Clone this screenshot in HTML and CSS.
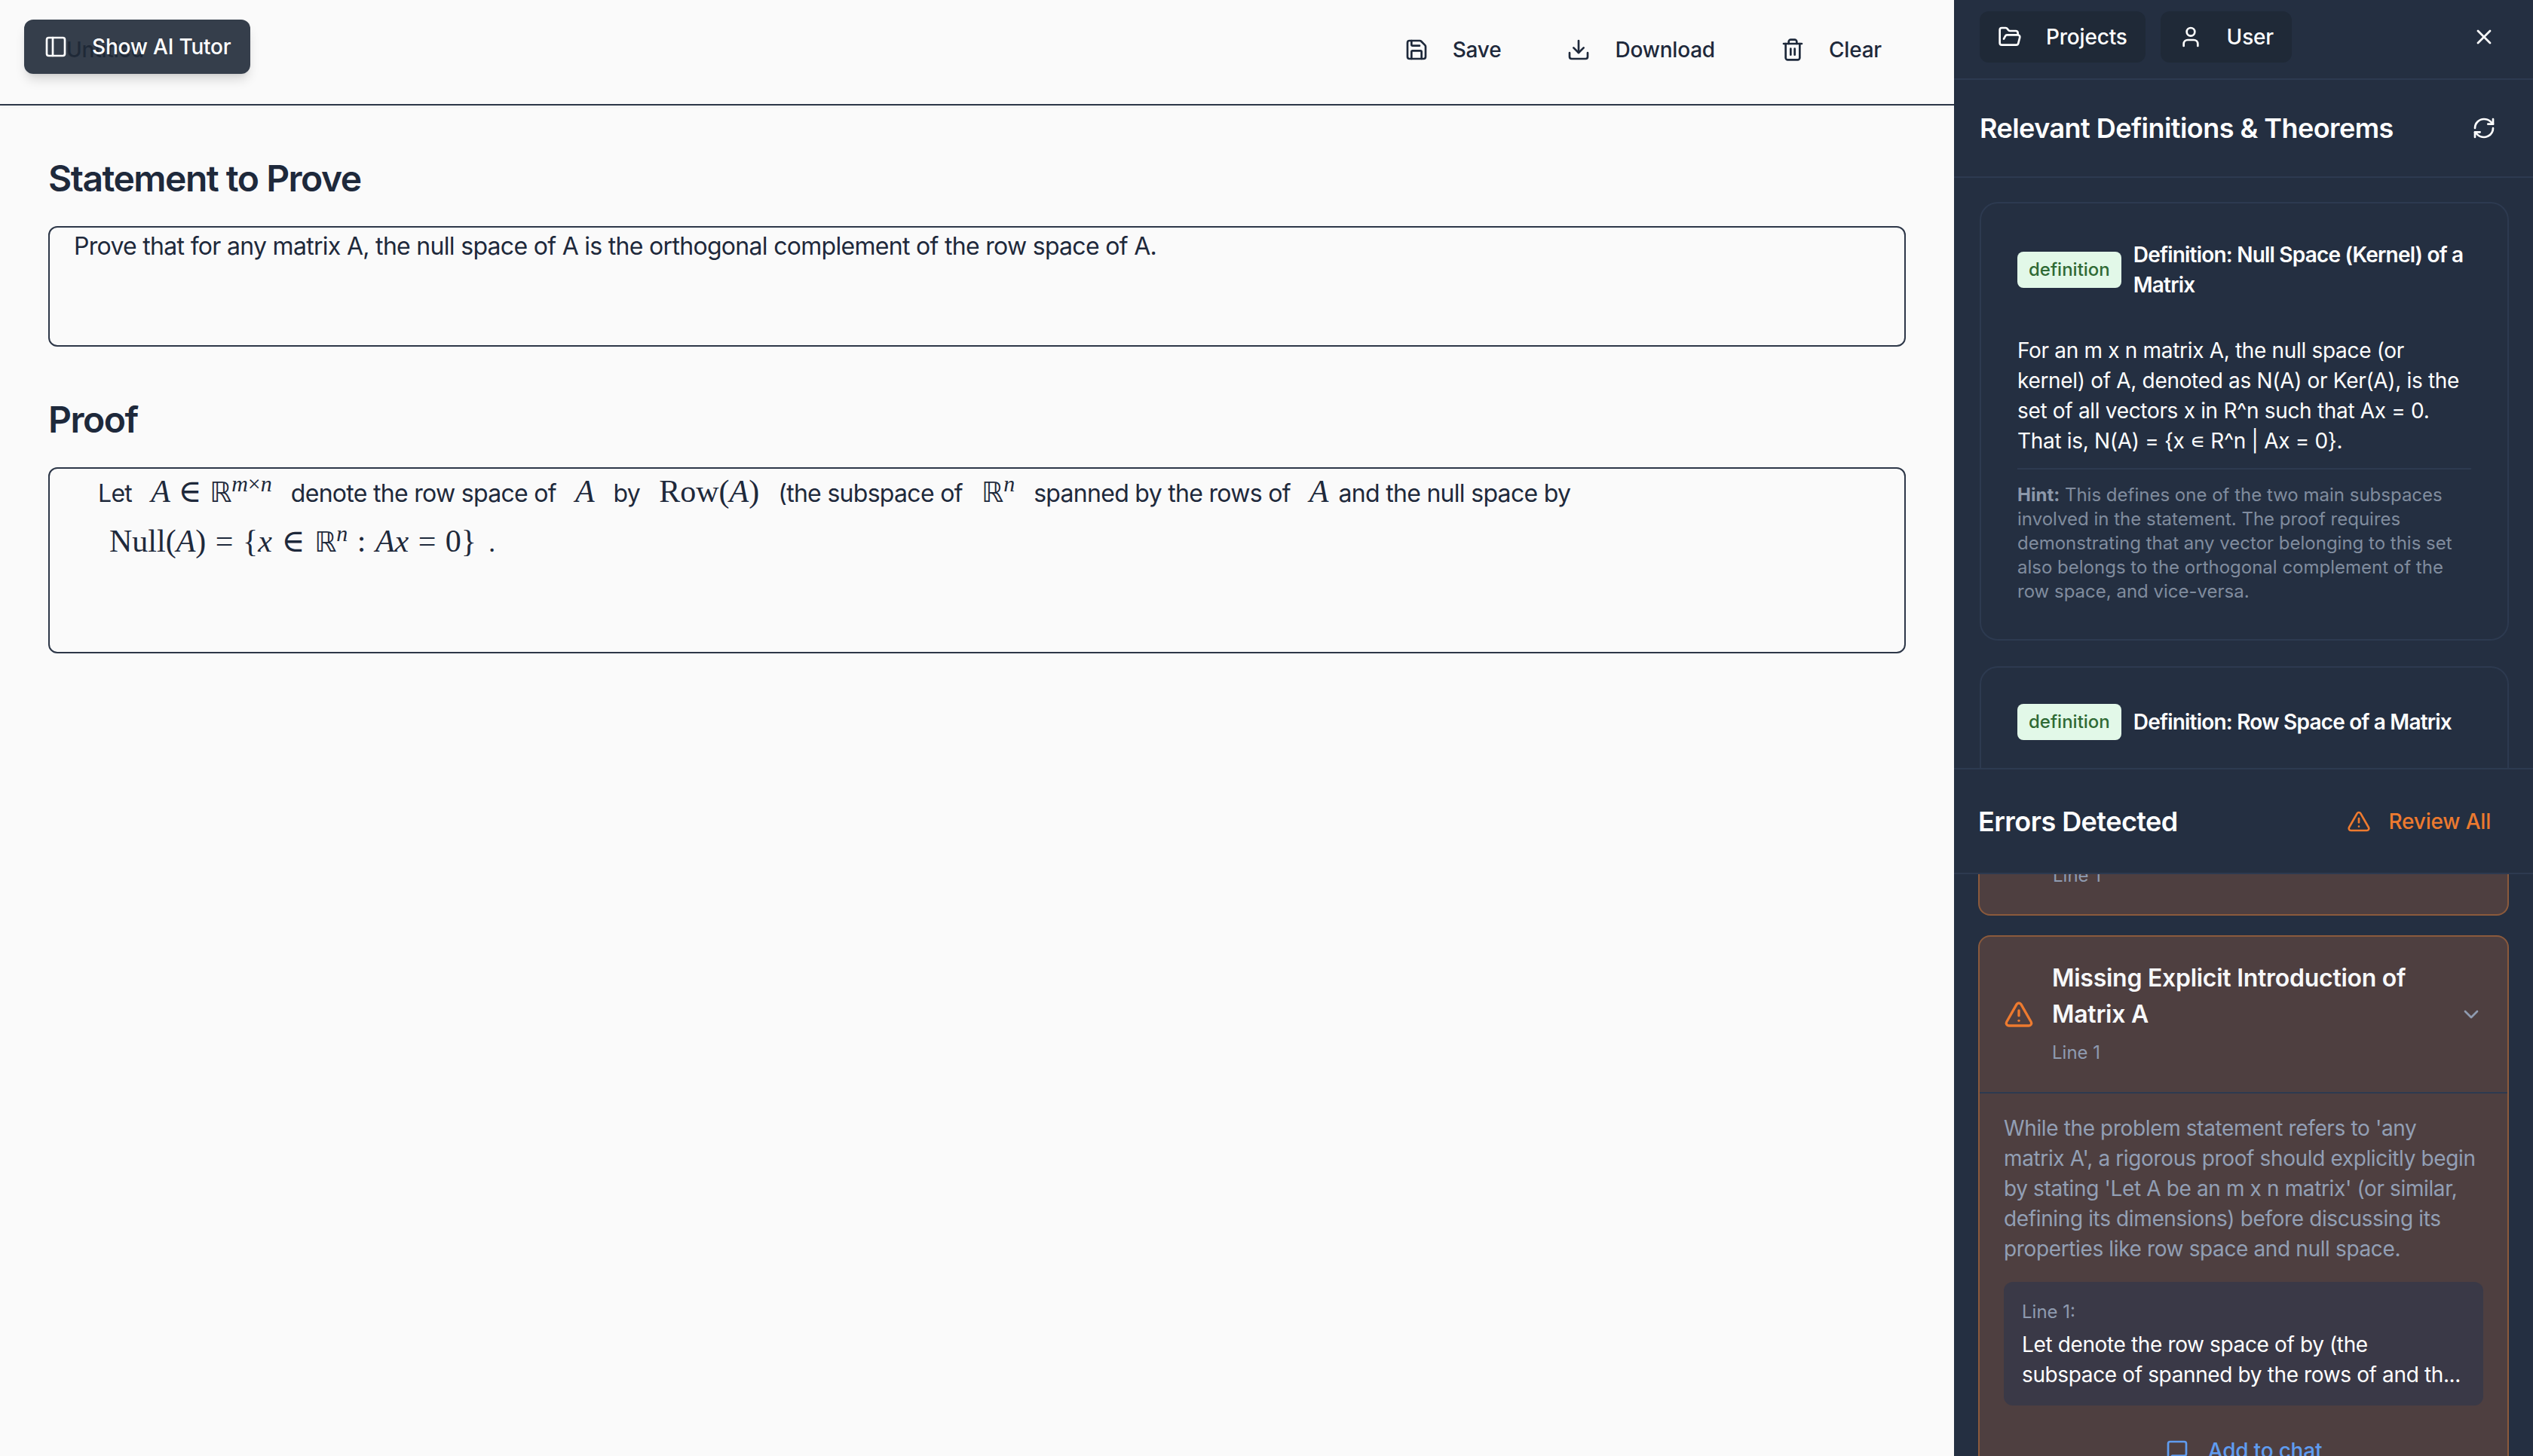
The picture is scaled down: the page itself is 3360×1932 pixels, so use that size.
FILE: index.html
```html
<!DOCTYPE html>
<html lang="en">
<head>
<meta charset="utf-8">
<title>Proof Editor</title>
<link rel="stylesheet" href="styles.css">
</head>
<body>
<svg class="sprite" width="0" height="0" aria-hidden="true">
  <symbol id="i-panel" viewBox="0 0 24 24"><rect x="3" y="3" width="18" height="18" rx="2"/><path d="M9 3v18"/></symbol>
  <symbol id="i-save" viewBox="0 0 24 24"><path d="M15.2 3a2 2 0 0 1 1.4.6l3.8 3.8a2 2 0 0 1 .6 1.4V19a2 2 0 0 1-2 2H5a2 2 0 0 1-2-2V5a2 2 0 0 1 2-2z"/><path d="M17 21v-7a1 1 0 0 0-1-1H8a1 1 0 0 0-1 1v7"/><path d="M7 3v4a1 1 0 0 0 1 1h7"/></symbol>
  <symbol id="i-download" viewBox="0 0 24 24"><path d="M21 15v4a2 2 0 0 1-2 2H5a2 2 0 0 1-2-2v-4"/><path d="m7 10 5 5 5-5"/><path d="M12 15V3"/></symbol>
  <symbol id="i-trash" viewBox="0 0 24 24"><path d="M3 6h18"/><path d="M19 6v14c0 1-1 2-2 2H7c-1 0-2-1-2-2V6"/><path d="M8 6V4c0-1 1-2 2-2h4c1 0 2 1 2 2v2"/><path d="M10 11v6"/><path d="M14 11v6"/></symbol>
  <symbol id="i-folder" viewBox="0 0 24 24"><path d="m6 14 1.5-2.9A2 2 0 0 1 9.24 10H20a2 2 0 0 1 1.94 2.5l-1.54 6a2 2 0 0 1-1.95 1.5H4a2 2 0 0 1-2-2V5a2 2 0 0 1 2-2h3.9a2 2 0 0 1 1.69.9l.81 1.2a2 2 0 0 0 1.67.9H18a2 2 0 0 1 2 2v2"/></symbol>
  <symbol id="i-user" viewBox="0 0 24 24"><path d="M19 21v-2a4 4 0 0 0-4-4H9a4 4 0 0 0-4 4v2"/><circle cx="12" cy="7" r="4"/></symbol>
  <symbol id="i-x" viewBox="0 0 24 24"><path d="M18 6 6 18"/><path d="m6 6 12 12"/></symbol>
  <symbol id="i-refresh" viewBox="0 0 24 24"><path d="M3 12a9 9 0 0 1 9-9 9.75 9.75 0 0 1 6.74 2.74L21 8"/><path d="M21 3v5h-5"/><path d="M21 12a9 9 0 0 1-9 9 9.75 9.75 0 0 1-6.74-2.74L3 16"/><path d="M8 16H3v5"/></symbol>
  <symbol id="i-alert" viewBox="0 0 24 24"><path d="m21.73 18-8-14a2 2 0 0 0-3.48 0l-8 14A2 2 0 0 0 4 21h16a2 2 0 0 0 1.73-3"/><path d="M12 9v4"/><path d="M12 17h.01"/></symbol>
  <symbol id="i-chev" viewBox="0 0 24 24"><path d="m6 9 6 6 6-6"/></symbol>
  <symbol id="i-chat" viewBox="0 0 24 24"><path d="M21 15a2 2 0 0 1-2 2H7l-4 4V5a2 2 0 0 1 2-2h14a2 2 0 0 1 2 2z"/></symbol>
</svg>

<div class="app">
  <main class="main">
    <button class="tutor-btn"><svg class="icon"><use href="#i-panel"/></svg>Show AI Tutor</button>
    <header class="topbar">
      <div class="doc-title">Untitled</div>
      <div class="actions">
        <button class="action"><svg class="icon"><use href="#i-save"/></svg>Save</button>
        <button class="action"><svg class="icon"><use href="#i-download"/></svg>Download</button>
        <button class="action"><svg class="icon"><use href="#i-trash"/></svg>Clear</button>
      </div>
    </header>
    <div class="content">
      <h2 class="section-title">Statement to Prove</h2>
      <div class="editor editor-statement">Prove that for any matrix A, the null space of A is the orthogonal complement of the row space of A.</div>
      <h2 class="section-title section-proof">Proof</h2>
      <div class="editor editor-proof">
        <div class="proof-line">
          <span>Let</span>
          <span class="math"><i>A</i> ∈ <b class="bb">ℝ</b><sup><i>m</i>×<i>n</i></sup></span>
          <span>denote the row space of</span>
          <span class="math"><i>A</i></span>
          <span>by</span>
          <span class="math">Row(<i>A</i>)</span>
          <span>(the subspace of</span>
          <span class="math"><b class="bb">ℝ</b><sup><i>n</i></sup></span>
          <span>spanned by the rows of</span>
          <span class="math"><i>A</i></span>
          <span class="and">and the null space by</span>
        </div>
        <div class="proof-line proof-line-2">
          <span class="math math-wide">Null(<i>A</i>) = {<i>x</i> ∈ <b class="bb">ℝ</b><sup><i>n</i></sup> : <i>Ax</i> = 0}</span>
          <span>.</span>
        </div>
      </div>
    </div>
  </main>

  <aside class="panel">
    <div class="panel-top">
      <button class="nav-btn"><svg class="icon"><use href="#i-folder"/></svg>Projects</button>
      <button class="nav-btn"><svg class="icon"><use href="#i-user"/></svg>User</button>
      <svg class="icon close"><use href="#i-x"/></svg>
    </div>

    <section class="defs">
      <div class="panel-head">
        <h3 class="panel-title">Relevant Definitions &amp; Theorems</h3>
        <svg class="icon"><use href="#i-refresh"/></svg>
      </div>
      <div class="defs-list">
        <article class="def-card">
          <div class="def-head">
            <span class="badge">definition</span>
            <span class="def-title">Definition: Null Space (Kernel) of a Matrix</span>
          </div>
          <p class="def-body">For an m x n matrix A, the null space (or kernel) of A, denoted as N(A) or Ker(A), is the set of all vectors x in R^n such that Ax = 0. That is, N(A) = {x ∊ R^n | Ax = 0}.</p>
          <p class="def-hint"><strong>Hint:</strong> This defines one of the two main subspaces involved in the statement. The proof requires demonstrating that any vector belonging to this set also belongs to the orthogonal complement of the row space, and vice-versa.</p>
        </article>
        <article class="def-card">
          <div class="def-head">
            <span class="badge">definition</span>
            <span class="def-title">Definition: Row Space of a Matrix</span>
          </div>
        </article>
      </div>
    </section>

    <section class="errors">
      <div class="errors-head">
        <h3 class="panel-title">Errors Detected</h3>
        <div class="review"><svg class="icon"><use href="#i-alert"/></svg>Review All</div>
      </div>
      <div class="errors-list">
        <article class="err-card err-card-prev">
          <div class="err-line err-line-prev">Line 1</div>
        </article>
        <article class="err-card">
          <div class="err-head">
            <svg class="icon err-icon"><use href="#i-alert"/></svg>
            <div class="err-text">
              <div class="err-title">Missing Explicit Introduction of Matrix A</div>
              <div class="err-line">Line 1</div>
            </div>
            <svg class="icon chev"><use href="#i-chev"/></svg>
          </div>
          <div class="err-body">
            <p class="err-desc">While the problem statement refers to 'any matrix A', a rigorous proof should explicitly begin by stating 'Let A be an m x n matrix' (or similar, defining its dimensions) before discussing its properties like row space and null space.</p>
            <div class="quote">
              <div class="quote-label">Line 1:</div>
              <div class="quote-text">Let denote the row space of by (the subspace of spanned by the rows of and th...</div>
            </div>
            <div class="add-chat"><svg class="icon"><use href="#i-chat"/></svg>Add to chat</div>
          </div>
        </article>
      </div>
    </section>
  </aside>
</div>
</body>
</html>
```

FILE: styles.css
```css
* { box-sizing: border-box; }
html, body { margin: 0; height: 100%; }
body {
  background: #fafafa;
  color: #1e293b;
  font-family: Inter, "Liberation Sans", sans-serif;
  font-size: 28px;
  letter-spacing: -0.2px;
  overflow: hidden;
}
.sprite { position: absolute; }
button { font: inherit; letter-spacing: inherit; border: 0; background: none; color: inherit; padding: 0; }
h2, h3, p { margin: 0; }

.icon {
  width: 32px;
  height: 32px;
  flex: none;
  fill: none;
  stroke: currentColor;
  stroke-width: 2;
  stroke-linecap: round;
  stroke-linejoin: round;
}

.app { display: flex; height: 1932px; }
.main { position: relative; width: 2592px; flex: none; }

.tutor-btn {
  position: absolute;
  left: 32px;
  top: 26px;
  width: 300px;
  height: 72px;
  display: flex;
  align-items: center;
  gap: 32px;
  padding-left: 26px;
  background: rgba(31, 41, 55, 0.9);
  color: #fff;
  border-radius: 12px;
  font-weight: 500;
  box-shadow: 0 10px 15px -3px rgba(0, 0, 0, .15), 0 4px 6px -4px rgba(0, 0, 0, .1);
}

.topbar {
  height: 140px;
  padding: 0 96px 6px 88px;
  display: flex;
  align-items: center;
  justify-content: space-between;
  border-bottom: 2px solid #2d3748;
  box-shadow: 0 2px 4px rgba(0, 0, 0, .04);
}
.doc-title { color: #1e293b; font-size: 28px; font-weight: 500; }
.actions { display: flex; gap: 87px; }
.action { display: flex; align-items: center; gap: 32px; font-weight: 500; }

.content { padding: 69px 64px 0; }
.section-title { font-size: 48px; line-height: 56px; font-weight: 600; letter-spacing: -1.5px; color: #1e293b; margin-bottom: 35px; }
.section-proof { margin-top: 69px; margin-bottom: 35px; }
.editor { border: 2px solid #2d3748; border-radius: 12px; }
.editor-statement { height: 160px; padding: 5px 32px; line-height: 40px; font-size: 32px; letter-spacing: -0.7px; }
.editor-proof { height: 247px; padding: 5px 0 0 64px; }

.proof-line { display: flex; gap: 25px; align-items: baseline; height: 46px; font-size: 32px; letter-spacing: -0.7px; }
.proof-line-2 { margin: 20px 0 0 15px; gap: 16px; }
.math { font-family: "Liberation Serif", "DejaVu Serif", serif; font-size: 42px; letter-spacing: 0; white-space: nowrap; }
.math-wide { word-spacing: 2px; }
.math i { font-style: italic; }
.math sup { font-size: 30px; line-height: 0; vertical-align: 14px; }
.bb { font-family: "DejaVu Sans", serif; font-weight: 400; font-size: 37px; }
.and { margin-left: -12px; }

.panel {
  width: 768px;
  flex: none;
  background: #242f41;
  color: #fff;
  display: flex;
  flex-direction: column;
  overflow: hidden;
}
.panel-top {
  height: 106px;
  flex: none;
  padding: 15px 49px 0 34px;
  display: flex;
  align-items: flex-start;
  gap: 20px;
  border-bottom: 2px solid #2d3a50;
}
.nav-btn {
  height: 68px;
  display: flex;
  align-items: center;
  gap: 32px;
  padding: 0 24px;
  background: #1f2937;
  border-radius: 12px;
  font-weight: 500;
}
.close { margin: 18px 0 0 auto; }

.defs { height: 913px; flex: none; overflow: hidden; display: flex; flex-direction: column; }
.panel-head {
  height: 130px;
  flex: none;
  padding: 0 49px 0 34px;
  display: flex;
  align-items: center;
  justify-content: space-between;
  border-bottom: 2px solid #2d3a50;
}
.panel-title { font-size: 36px; font-weight: 600; letter-spacing: -0.55px; color: #fff; }
.defs-list { padding: 32px 32px 0 34px; display: flex; flex-direction: column; gap: 34px; }
.def-card {
  flex: none;
  border: 2px solid #2d3a50;
  border-radius: 24px;
  padding: 48px 48px 47px;
}
.def-card:last-child { height: 200px; }
.def-head { display: flex; align-items: center; gap: 16px; line-height: 40px; }
.badge {
  flex: none;
  height: 48px;
  padding: 0 15px;
  display: flex;
  align-items: center;
  background: #e2f8e8;
  color: #2f6a34;
  border-radius: 8px;
  font-size: 24px;
  letter-spacing: 0;
  font-weight: 500;
}
.def-title { font-weight: 600; letter-spacing: -0.8px; }
.def-body { margin-top: 47px; line-height: 40px; letter-spacing: -0.32px; color: #fff; }
.def-hint {
  margin-top: 16px;
  padding-top: 18px;
  border-top: 2px solid #2d3a50;
  font-size: 24px;
  letter-spacing: 0;
  line-height: 32px;
  color: #808c9e;
}
.def-hint strong { font-weight: 700; color: #8c98aa; }

.errors { flex: 1; min-height: 0; overflow: hidden; border-top: 2px solid #2d3a50; display: flex; flex-direction: column; }
.errors-head {
  height: 139px;
  flex: none;
  padding: 0 56px 0 32px;
  display: flex;
  align-items: center;
  justify-content: space-between;
  border-bottom: 2px solid #2d3a50;
}
.review { display: flex; align-items: center; gap: 24px; color: #ed7a2f; font-weight: 500; }
.errors-list { padding: 0 32px; display: flex; flex-direction: column; gap: 26px; }
.err-card {
  background: #4e3f40;
  border: 2px solid #8b5a3c;
  border-radius: 16px;
  flex: none;
}
.err-card-prev { border-top: 0; border-radius: 0 0 16px 16px; height: 55px; overflow: hidden; }
.err-head { display: flex; align-items: center; padding: 31px 32px 36px 32px; gap: 24px; border-bottom: 2px solid #2d3a50; }
.err-text { flex: 1; }
.err-title { font-size: 32px; line-height: 48px; font-weight: 600; letter-spacing: -0.27px; color: #f7f8fa; }
.err-line { margin-top: 11px; font-size: 24px; line-height: 32px; letter-spacing: 0; color: #8f9bb0; }
.err-line-prev { margin: -14px 0 0 97px; }
.err-icon { width: 40px; height: 40px; margin-top: 4px; color: #ed7a2f; }
.chev { color: #8f9bb0; margin-top: 4px; }
.err-body { padding: 26px 32px 0 32px; }
.err-desc { line-height: 40px; letter-spacing: -0.37px; padding-right: 4px; color: #929fb5; }
.quote { margin-top: 24px; background: #3a3947; border-radius: 12px; padding: 24px; height: 164px; }
.quote-label { font-size: 24px; line-height: 32px; letter-spacing: 0; color: #8f9bb0; }
.quote-text { margin-top: 7px; line-height: 40px; letter-spacing: -0.37px; color: #fff; }
.add-chat { margin-top: 40px; height: 40px; display: flex; align-items: center; justify-content: center; gap: 25px; color: #5f9cf0; font-weight: 500; }
```
